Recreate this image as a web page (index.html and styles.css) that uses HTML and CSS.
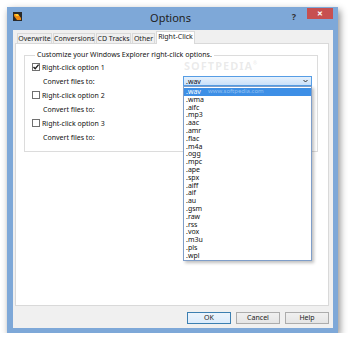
FILE: index.html
```html
<!DOCTYPE html>
<html>
<head>
    <title>Options</title>
    <link rel="stylesheet" href="styles.css">
</head>
<body>

    <div class="window">
        <!-- Title bar -->
        <div class="titlebar">
            <svg class="appicon" width="9" height="9" viewBox="0 0 9 9">
                <rect width="9" height="9" fill="#2a2a2a"/>
                <path d="M1 2 L5 2 L8 6 L8 8 L4 8 L1 4 Z" fill="#f08a10"/>
                <path d="M2 2 L5 2 L6 4 L3 4 Z" fill="#ffd030"/>
            </svg>
            <div class="title">Options</div>
            <div class="helpbtn">?</div>
            <div class="closebtn">&#x2715;</div>
        </div>

        <div class="client">
            <div class="tabs">
                <div class="tab w1">Overwrite</div>
                <div class="tab w2">Conversions</div>
                <div class="tab w3">CD Tracks</div>
                <div class="tab w4">Other</div>
                <div class="tab w5 active">Right-Click</div>
            </div>

            <div class="panel">
                <fieldset class="group">
                    <legend>Customize your Windows Explorer right-click options.</legend>

                    <div class="row"><span class="check"><svg width="8" height="8" viewBox="0 0 8 8"><path d="M1.5 4 L3.2 5.8 L6.6 1.6" stroke="#222" stroke-width="1.4" fill="none"/></svg></span>Right-click option 1</div>
                    <div class="row sub">
                        <span>Convert files to:</span>
                        <div class="combo">
                            <span>.wav</span>
                            <svg class="arrow" width="5" height="4" viewBox="0 0 5 4"><path d="M0.5 1 L2.5 3 L4.5 1" stroke="#333" fill="none"/></svg>
                            <div class="droplist">
                                <div class="item selected">.wav</div>
                                <div class="item">.wma</div>
                                <div class="item">.aifc</div>
                                <div class="item">.mp3</div>
                                <div class="item">.aac</div>
                                <div class="item">.amr</div>
                                <div class="item">.flac</div>
                                <div class="item">.m4a</div>
                                <div class="item">.ogg</div>
                                <div class="item">.mpc</div>
                                <div class="item">.ape</div>
                                <div class="item">.spx</div>
                                <div class="item">.aiff</div>
                                <div class="item">.aif</div>
                                <div class="item">.au</div>
                                <div class="item">.gsm</div>
                                <div class="item">.raw</div>
                                <div class="item">.rss</div>
                                <div class="item">.vox</div>
                                <div class="item">.m3u</div>
                                <div class="item">.pls</div>
                                <div class="item">.wpl</div>
                            </div>
                        </div>
                    </div>

                    <div class="row"><span class="check"></span>Right-click option 2</div>
                    <div class="row sub"><span>Convert files to:</span></div>

                    <div class="row"><span class="check"></span>Right-click option 3</div>
                    <div class="row sub"><span>Convert files to:</span></div>
                </fieldset>

                <div class="watermark">SOFTPEDIA<sup>&reg;</sup></div>
                <div class="watermark-url">www.softpedia.com</div>
            </div>

            <div class="buttons">
                <div class="btn default">OK</div>
                <div class="btn">Cancel</div>
                <div class="btn">Help</div>
            </div>
        </div>
    </div>

</body>
</html>
```

FILE: styles.css
```css
body {
    margin: 0;
    background: #ffffff;
    font-family: "Noto Sans", "Open Sans", sans-serif;
    font-size: 7px;
    color: #111;
}
.window {
    margin: 7px 0 0 7px;
    width: 331px;
    height: 326px;
    box-sizing: border-box;
    padding: 0 5px 5px 6px;
    background: #7ea8d8;
    box-shadow: 2px 3px 7px rgba(0, 0, 0, 0.45);
    display: flex;
    flex-direction: column;
}
.titlebar {
    height: 23px;
    display: flex;
    align-items: flex-start;
    position: relative;
}
.appicon {
    margin: 5px 0 0 0;
}
.title {
    flex: 1;
    text-align: center;
    font-size: 11px;
    line-height: 11px;
    margin-top: 5px;
    padding-left: 30px;
    color: #222;
}
.helpbtn {
    width: 10px;
    margin-top: 3px;
    font-size: 9px;
    font-weight: bold;
    color: #333;
    text-align: center;
    margin-right: 8px;
}
.closebtn {
    width: 26px;
    height: 11px;
    margin-top: 1px;
    background: #c75050;
    color: #fff;
    font-size: 7px;
    line-height: 11px;
    text-align: center;
    font-weight: bold;
}
.client {
    flex: 1;
    background: #f0f0f0;
    padding: 1px 4px 4px 2px;
    display: flex;
    flex-direction: column;
}
.tabs {
    display: flex;
    align-items: flex-end;
    height: 12px;
    padding-left: 2px;
}
.tab {
    height: 10px;
    box-sizing: border-box;
    border: 1px solid #d9d9d9;
    border-bottom: none;
    background: #f0f0f0;
    margin-right: 1px;
    text-align: center;
    line-height: 9px;
    color: #222;
}
.tab.active {
    height: 13px;
    margin-bottom: -1px;
    background: #fff;
    position: relative;
    z-index: 1;
    line-height: 10px;
}
.w1 { width: 35px; }
.w2 { width: 42px; }
.w3 { width: 35px; }
.w4 { width: 23px; }
.w5 { width: 39px; }

.panel {
    height: 263px;
    box-sizing: border-box;
    background: #fff;
    border: 1px solid #d9d9d9;
    padding: 7px 10px 0 8px;
    position: relative;
}
.group {
    margin: 0;
    border: 1px solid #dcdcdc;
    padding: 1px 5px 7px 7px;
}
.group legend {
    padding: 0 2px;
    margin-left: 3px;
    line-height: 8px;
}
.row {
    height: 14px;
    display: flex;
    align-items: center;
}
.row.sub {
    padding-left: 11px;
}
.check {
    width: 8px;
    height: 8px;
    box-sizing: border-box;
    border: 1px solid #707070;
    background: #fff;
    margin-right: 2px;
    display: flex;
    align-items: center;
    justify-content: center;
}
.check svg {
    flex: none;
}
.combo {
    margin-left: auto;
    width: 129px;
    height: 10px;
    box-sizing: border-box;
    border: 1px solid #569de5;
    background: linear-gradient(#e6f1fc, #c9e0fa);
    display: flex;
    align-items: center;
    justify-content: space-between;
    padding: 0 3px 0 2px;
    position: relative;
}
.droplist {
    position: absolute;
    top: 9px;
    left: -1px;
    width: 129px;
    box-sizing: border-box;
    border: 1px solid #7f9ec9;
    background: #fff;
    box-shadow: 2px 2px 3px rgba(0, 0, 0, 0.25);
    z-index: 2;
    padding-top: 1px;
}
.item {
    height: 7.8px;
    line-height: 7.8px;
    padding-left: 2px;
}
.item.selected {
    background: #3d8fe6;
    color: #fff;
}
.watermark {
    position: absolute;
    left: 168px;
    top: 16px;
    font-size: 11px;
    line-height: 11px;
    letter-spacing: 1px;
    color: rgba(160, 160, 160, 0.22);
    font-weight: bold;
    z-index: 3;
}
.watermark sup {
    font-size: 5px;
    line-height: 0;
}
.watermark-url {
    position: absolute;
    left: 192px;
    top: 44px;
    font-size: 6px;
    line-height: 7px;
    color: rgba(255, 255, 255, 0.45);
    z-index: 3;
}
.buttons {
    margin-top: 6px;
    display: flex;
    justify-content: flex-end;
    gap: 5px;
}
.btn {
    width: 44px;
    height: 12px;
    box-sizing: border-box;
    border: 1px solid #acacac;
    background: linear-gradient(#f0f0f0, #e5e5e5);
    text-align: center;
    line-height: 10px;
    color: #222;
}
.btn.default {
    border-color: #3c7fb1;
    background: linear-gradient(#ecf4fc, #dcecfc);
}
```
